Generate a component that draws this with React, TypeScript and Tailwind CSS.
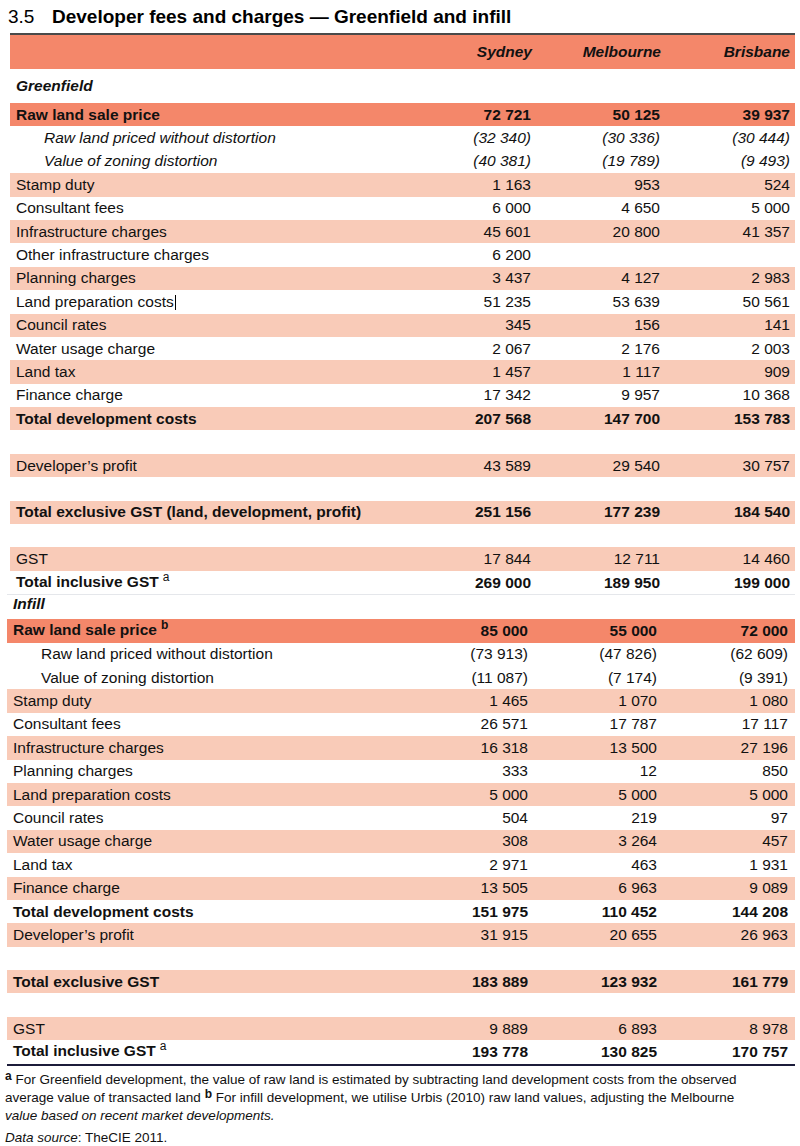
type Kind = "dark" | "peach" | "plain" | "blank";

type Row = {
  label: string;
  vals?: [string, string, string];
  kind: Kind;
  bold?: boolean;
  italic?: boolean;
  indent?: boolean;
  sup?: string;
  caret?: boolean;
};

const greenfield: Row[] = [
  { label: "Raw land sale price", vals: ["72 721", "50 125", "39 937"], kind: "dark", bold: true },
  { label: "Raw land priced without distortion", vals: ["(32 340)", "(30 336)", "(30 444)"], kind: "plain", italic: true, indent: true },
  { label: "Value of zoning distortion", vals: ["(40 381)", "(19 789)", "(9 493)"], kind: "plain", italic: true, indent: true },
  { label: "Stamp duty", vals: ["1 163", "953", "524"], kind: "peach" },
  { label: "Consultant fees", vals: ["6 000", "4 650", "5 000"], kind: "plain" },
  { label: "Infrastructure charges", vals: ["45 601", "20 800", "41 357"], kind: "peach" },
  { label: "Other infrastructure charges", vals: ["6 200", "", ""], kind: "plain" },
  { label: "Planning charges", vals: ["3 437", "4 127", "2 983"], kind: "peach" },
  { label: "Land preparation costs", vals: ["51 235", "53 639", "50 561"], kind: "plain", caret: true },
  { label: "Council rates", vals: ["345", "156", "141"], kind: "peach" },
  { label: "Water usage charge", vals: ["2 067", "2 176", "2 003"], kind: "plain" },
  { label: "Land tax", vals: ["1 457", "1 117", "909"], kind: "peach" },
  { label: "Finance charge", vals: ["17 342", "9 957", "10 368"], kind: "plain" },
  { label: "Total development costs", vals: ["207 568", "147 700", "153 783"], kind: "peach", bold: true },
  { label: "", kind: "blank" },
  { label: "Developer\u2019s profit", vals: ["43 589", "29 540", "30 757"], kind: "peach" },
  { label: "", kind: "blank" },
  { label: "Total exclusive GST (land, development, profit)", vals: ["251 156", "177 239", "184 540"], kind: "peach", bold: true },
  { label: "", kind: "blank" },
  { label: "GST", vals: ["17 844", "12 711", "14 460"], kind: "peach" },
  { label: "Total inclusive GST", vals: ["269 000", "189 950", "199 000"], kind: "plain", bold: true, sup: "a" },
];

const infill: Row[] = [
  { label: "Raw land sale price", vals: ["85 000", "55 000", "72 000"], kind: "dark", bold: true, sup: "b" },
  { label: "Raw land priced without distortion", vals: ["(73 913)", "(47 826)", "(62 609)"], kind: "plain", indent: true },
  { label: "Value of zoning distortion", vals: ["(11 087)", "(7 174)", "(9 391)"], kind: "plain", indent: true },
  { label: "Stamp duty", vals: ["1 465", "1 070", "1 080"], kind: "peach" },
  { label: "Consultant fees", vals: ["26 571", "17 787", "17 117"], kind: "plain" },
  { label: "Infrastructure charges", vals: ["16 318", "13 500", "27 196"], kind: "peach" },
  { label: "Planning charges", vals: ["333", "12", "850"], kind: "plain" },
  { label: "Land preparation costs", vals: ["5 000", "5 000", "5 000"], kind: "peach" },
  { label: "Council rates", vals: ["504", "219", "97"], kind: "plain" },
  { label: "Water usage charge", vals: ["308", "3 264", "457"], kind: "peach" },
  { label: "Land tax", vals: ["2 971", "463", "1 931"], kind: "plain" },
  { label: "Finance charge", vals: ["13 505", "6 963", "9 089"], kind: "peach" },
  { label: "Total development costs", vals: ["151 975", "110 452", "144 208"], kind: "plain", bold: true },
  { label: "Developer\u2019s profit", vals: ["31 915", "20 655", "26 963"], kind: "peach" },
  { label: "", kind: "blank" },
  { label: "Total exclusive GST", vals: ["183 889", "123 932", "161 779"], kind: "peach", bold: true },
  { label: "", kind: "blank" },
  { label: "GST", vals: ["9 889", "6 893", "8 978"], kind: "peach" },
  { label: "Total inclusive GST", vals: ["193 778", "130 825", "170 757"], kind: "plain", bold: true, sup: "a" },
];

function bgFor(kind: Kind) {
  if (kind === "dark") return "bg-[#f4876a]";
  if (kind === "peach") return "bg-[#f9cbb8]";
  return "bg-white";
}

function TableRow({ row, infillStyle }: { row: Row; infillStyle?: boolean }) {
  const weight = row.bold ? "font-bold" : "font-normal";
  const slant = row.italic ? "italic" : "not-italic";
  const cols = infillStyle
    ? "grid-cols-[398px_129px_129px_132px]"
    : "grid-cols-[397px_129px_129px_130px]";
  return (
    <div className={`grid ${cols} h-[23.4px] items-center ${bgFor(row.kind)} ${weight} ${slant}`}>
      <div className={`${row.indent ? "pl-[34px]" : "pl-[6px]"} whitespace-nowrap`}>
        {row.label}
        {row.caret && <span className="inline-block w-px h-[15px] bg-black align-[-3px] ml-px" />}
        {row.sup && (
          <span
            className={`relative -top-[6px] ml-[4px] text-[12px] ${row.kind === "dark" ? "font-bold" : "font-normal"}`}
          >
            {row.sup}
          </span>
        )}
      </div>
      {(row.vals ?? ["", "", ""]).map((v, i) => (
        <div key={i} className={`text-right ${infillStyle ? (i === 2 ? "pr-[7px]" : "pr-[6px]") : "pr-[5px]"}`}>
          {v}
        </div>
      ))}
    </div>
  );
}

export default function App() {
  return (
    <div className="w-[800px] min-h-[1146px] bg-white text-[#111] font-['Liberation_Sans',Arial,sans-serif] text-[15.5px] leading-[18px]">
      {/* title */}
      <div className="h-[33px] flex items-center pl-[8px] text-[19px] text-black">
        <span className="w-[44px] font-normal">3.5</span>
        <span className="font-bold">Developer fees and charges — Greenfield and infill</span>
      </div>

      {/* greenfield block */}
      <div className="ml-[10px] w-[785px]">
        <div className="h-[2px] bg-[#4a4a4a]" />
        <div className="grid grid-cols-[397px_129px_129px_130px] h-[34px] items-center bg-[#f4876a] font-bold italic">
          <div />
          <div className="text-right pr-[4px]">Sydney</div>
          <div className="text-right pr-[4px]">Melbourne</div>
          <div className="text-right pr-[5px]">Brisbane</div>
        </div>
        <div className="h-[34px] flex items-center pl-[6px] font-bold italic">Greenfield</div>
        {greenfield.map((r, i) => (
          <TableRow key={i} row={r} />
        ))}
      </div>

      {/* infill block */}
      <div className="ml-[7px] w-[788px] border-t border-gray-200">
        <div className="h-[24px] pl-[6px] font-bold italic">Infill</div>
        {infill.map((r, i) => (
          <TableRow key={i} row={r} infillStyle />
        ))}
        <div className="h-[2px] bg-[#1c1c3a]" />
      </div>

      {/* notes */}
      <div className="pl-[5px] pt-[5px] text-[13.5px] leading-[17px] text-[#111]">
        <p>
          <span className="relative -top-[4px] font-bold text-[12px]">a</span> For Greenfield development, the value of raw
          land is estimated by subtracting land development costs from the observed
          <br />
          average value of transacted land <span className="relative -top-[4px] font-bold text-[12px]">b</span> For infill
          development, we utilise Urbis (2010) raw land values, adjusting the Melbourne
          <br />
          <span className="italic">value based on recent market developments.</span>
        </p>
        <p className="mt-[5px]">
          <span className="italic">Data source</span>: TheCIE 2011.
        </p>
      </div>
    </div>
  );
}
